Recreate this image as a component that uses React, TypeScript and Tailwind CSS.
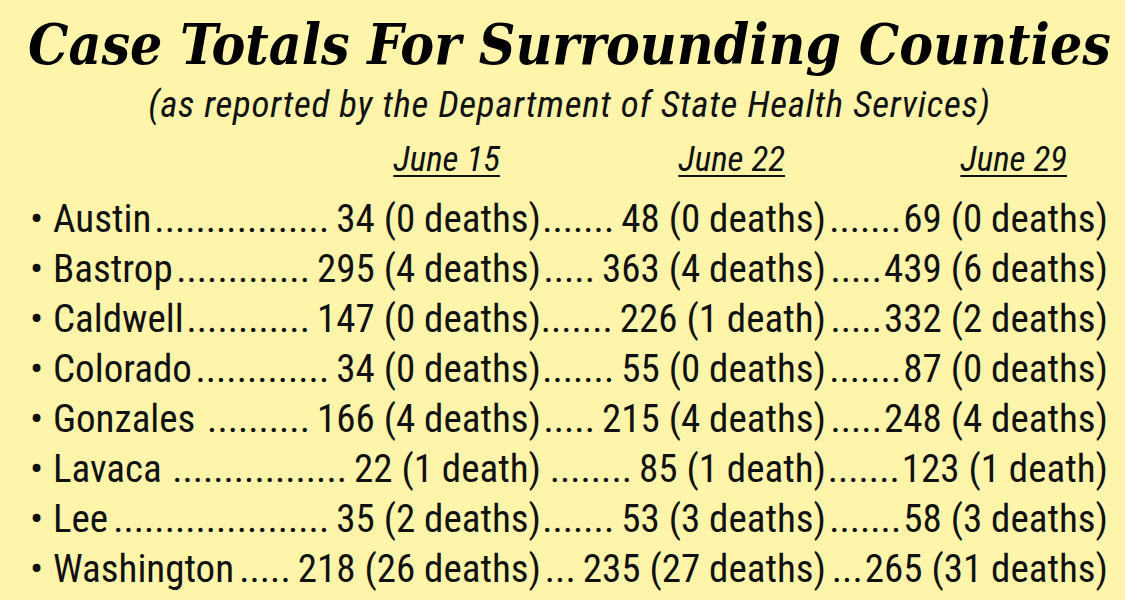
import { useLayoutEffect, useRef, useState } from "react";

const counties = [
  { name: "Austin", values: ["34 (0 deaths)", "48 (0 deaths)", "69 (0 deaths)"] },
  { name: "Bastrop", values: ["295 (4 deaths)", "363 (4 deaths)", "439 (6 deaths)"] },
  { name: "Caldwell", values: ["147 (0 deaths)", "226 (1 death)", "332 (2 deaths)"] },
  { name: "Colorado", values: ["34 (0 deaths)", "55 (0 deaths)", "87 (0 deaths)"] },
  { name: "Gonzales", values: ["166 (4 deaths)", "215 (4 deaths)", "248 (4 deaths)"] },
  { name: "Lavaca", values: ["22 (1 death)", "85 (1 death)", "123 (1 death)"] },
  { name: "Lee", values: ["35 (2 deaths)", "53 (3 deaths)", "58 (3 deaths)"] },
  { name: "Washington", values: ["218 (26 deaths)", "235 (27 deaths)", "265 (31 deaths)"] },
];

const dates = ["June 15", "June 22", "June 29"];

// dot leader: as many whole periods as fit, flush against the value on its right
function Leader() {
  const ref = useRef<HTMLSpanElement>(null);
  const [count, setCount] = useState(0);

  useLayoutEffect(() => {
    const el = ref.current;
    if (!el) return;
    const style = getComputedStyle(el);
    const ctx = document.createElement("canvas").getContext("2d");
    if (!ctx) return;
    ctx.font = `${style.fontSize} ${style.fontFamily}`;
    const dot = ctx.measureText(".").width || 10;
    setCount(Math.max(0, Math.floor(el.clientWidth / dot)));
  }, []);

  return (
    <span ref={ref} className="flex-1 min-w-0 flex justify-end overflow-hidden">
      <span className="shrink-0 whitespace-nowrap">{".".repeat(count)}</span>
    </span>
  );
}

export default function App() {
  return (
    <div className="w-[1125px] h-[600px] overflow-hidden bg-[#fef5aa] text-[#111] font-['Roboto_Condensed','Roboto',sans-serif]">
      <h1 className="pt-[12px] pl-[28px] text-[56.5px] leading-[64px] font-bold italic whitespace-nowrap text-black font-['DejaVu_Serif_Condensed','DejaVu_Serif',serif]">
        Case Totals For Surrounding Counties
      </h1>
      <p className="mt-[8px] pl-[14px] text-center text-[37px] leading-[42px] tracking-[0.7px] italic whitespace-nowrap">
        (as reported by the Department of State Health Services)
      </p>

      <div className="mt-[14px] pl-[30px] grid grid-cols-[511px_285px_282px]">
        {dates.map((d) => (
          <div key={d} className="pr-[41px] text-right text-[35px] leading-[40px] italic underline underline-offset-[4px] decoration-[2px]">
            {d}
          </div>
        ))}
      </div>

      <div className="mt-[14px] pl-[30px] grid grid-cols-[511px_285px_282px] text-[39px] leading-[50px] whitespace-nowrap">
        {counties.map((c) => (
          <div key={c.name} className="contents">
            <div className="flex items-baseline">
              <span className="w-[23px] shrink-0">•</span>
              <span className="shrink-0 pr-[2px]">{c.name}</span>
              <Leader />
              <span className="shrink-0 pl-[7px]">{c.values[0]}</span>
            </div>
            <div className="flex items-baseline">
              <Leader />
              <span className="shrink-0 pl-[7px]">{c.values[1]}</span>
            </div>
            <div className="flex items-baseline">
              <Leader />
              <span className="shrink-0 pl-[2px]">{c.values[2]}</span>
            </div>
          </div>
        ))}
      </div>
    </div>
  );
}
